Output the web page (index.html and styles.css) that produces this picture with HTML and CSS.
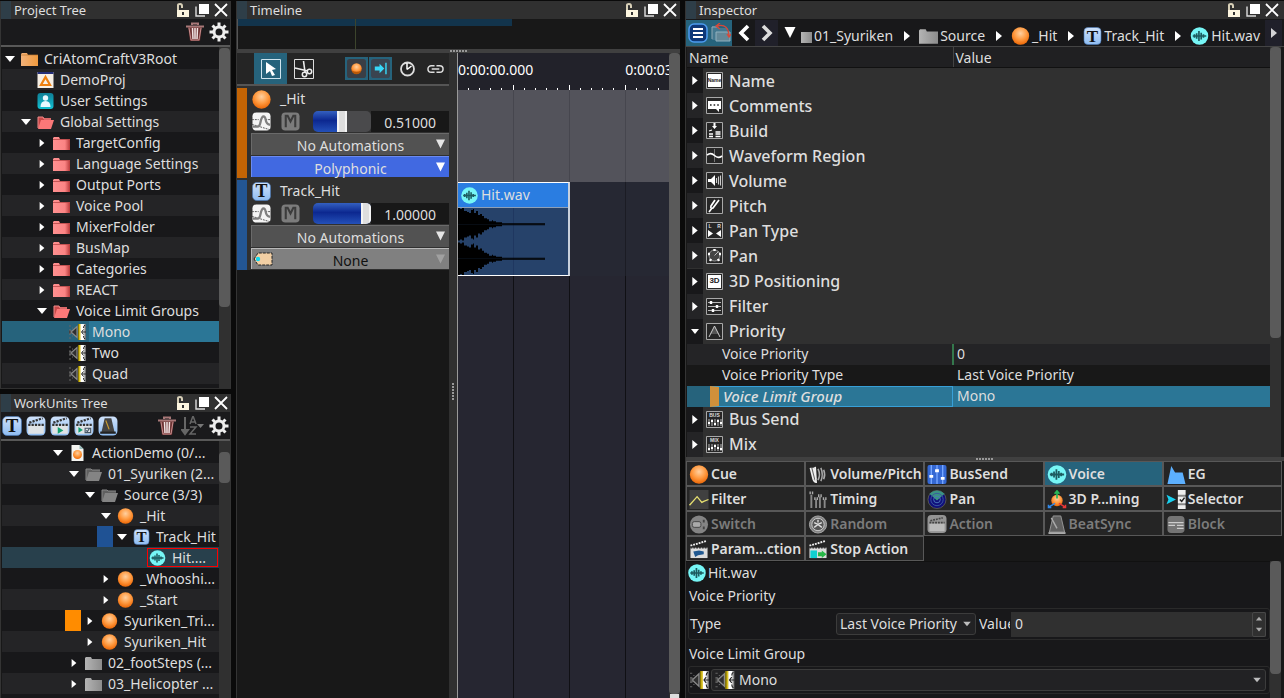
FILE: index.html
```html
<!DOCTYPE html>
<html lang="en">
<head>
<meta charset="utf-8">
<title>CriAtomCraft</title>
<link rel="stylesheet" href="styles.css">
</head>
<body>
<svg class="sprite" aria-hidden="true">
  <defs>
    <radialGradient id="gBall" cx=".5" cy=".35" r=".6"><stop offset="0" stop-color="#ffd0a0"/><stop offset=".6" stop-color="#ff9a40"/><stop offset="1" stop-color="#f07010"/></radialGradient>
    <linearGradient id="gRed"><stop offset="0" stop-color="#ff9090"/><stop offset=".7" stop-color="#fb8484"/><stop offset="1" stop-color="#b83a3a"/></linearGradient>
    <linearGradient id="gOrange"><stop offset="0" stop-color="#f2b27a"/><stop offset="1" stop-color="#f09a3e"/></linearGradient>
    <linearGradient id="gGray"><stop offset="0" stop-color="#b4b4b4"/><stop offset="1" stop-color="#8c8c8c"/></linearGradient>
    <linearGradient id="gTile" x2="0" y2="1"><stop offset="0" stop-color="#cfe2fb"/><stop offset="1" stop-color="#8fbdf2"/></linearGradient>
    <linearGradient id="gUser" x2="0" y2="1"><stop offset="0" stop-color="#0f7f96"/><stop offset="1" stop-color="#12c0d2"/></linearGradient>
    <linearGradient id="gSpk"><stop offset="0" stop-color="#fff"/><stop offset=".5" stop-color="#fff"/><stop offset="1" stop-color="#555"/></linearGradient>
  </defs>
  <symbol id="right" viewBox="0 0 8 10"><path d="M1 0l6 5-6 5z" fill="#fff"/></symbol>
  <symbol id="down" viewBox="0 0 10 8"><path d="M0 1h10L5 7z" fill="#fff"/></symbol>
  <symbol id="drop" viewBox="0 0 10 10"><path d="M0 0h10L5 10z" fill="#fff"/></symbol>
  <symbol id="lock" viewBox="0 0 14 14"><path d="M2 8V2q0-1 2-1t2 2v2" fill="none" stroke="#d8d0b8" stroke-width="2"/><path d="M1 7h12v7H1z" fill="#fdf6e0"/><path d="M6 9h2v3H6z" fill="#333"/></symbol>
  <symbol id="copy" viewBox="0 0 14 14"><path d="M1 3.500v9.500h9" fill="none" stroke="#ddd" stroke-width="1.400"/><path d="M4 1h10v10H4z" fill="#fff"/></symbol>
  <symbol id="close" viewBox="0 0 14 14"><path d="M1 1l12 12M13 1L1 13" stroke="#fff" stroke-width="1.800"/></symbol>
  <symbol id="trash" viewBox="0 0 20 20"><path d="M3 4h14l-2 15H5z" fill="#6e3434"/><path d="M1 4.500h18M7 3V1.500h6V3" fill="none" stroke="#a87878" stroke-width="2"/><path d="M4 6l2 12h8l2-12" fill="none" stroke="#c89090"/><path d="M7.500 6l.5 11M10 6v11M12.500 6l-.5 11" stroke="#f2e4e4" stroke-width="1.500"/></symbol>
  <symbol id="gear" viewBox="0 0 20 20"><circle cx="10" cy="10" r="5" fill="none" stroke="#eee" stroke-width="3"/><path d="M10 .5v4M10 15.500v4M.5 10h4M15.500 10h4M3.500 3.500l3 3M13.500 13.500l3 3M16.500 3.500l-3 3M6.500 13.500l-3 3" stroke="#eee" stroke-width="3"/></symbol>
  <symbol id="sort" viewBox="0 0 22 20"><path d="M3 1v15M0 14l3 4 3-4z" stroke="#666" stroke-width="2" fill="#666"/><path d="M8 8l3-8 3 8M9 6h4M8 11h6l-6 7h6" fill="none" stroke="#666" stroke-width="1.500"/><path d="M15 8h7l-3.500 4z" fill="#777"/></symbol>
  <symbol id="folder-o" viewBox="0 0 17 14"><path d="M0 2l1-1h5l1 2h10v11H0z" fill="url(#gOrange)"/><path d="M0 3h17" stroke="#c07830" stroke-width=".7"/></symbol>
  <symbol id="folder-r" viewBox="0 0 17 14"><path d="M0 2l1-1h5l1 2h10v11H0z" fill="url(#gRed)"/><path d="M0 3.500h17" stroke="#b84848" stroke-width=".8"/></symbol>
  <symbol id="folder-ro" viewBox="0 0 17 14"><path d="M1 13V2h5l1 1h7v3" fill="#c84848"/><path d="M1 14l3-9h13l-3 9z" fill="#fb7878"/><path d="M1 13V2h5l1 2h7" fill="none" stroke="#ee8a8a"/></symbol>
  <symbol id="folder-g" viewBox="0 0 17 14"><path d="M0 2l1-1h5l1 2h10v11H0z" fill="url(#gGray)"/></symbol>
  <symbol id="folder-half" viewBox="0 0 11 14"><path d="M0 3h11v11H0z" fill="url(#gGray)"/></symbol>
  <symbol id="folder-go" viewBox="0 0 17 14"><path d="M1 13V2h5l1 1h8v3" fill="#606060"/><path d="M1 14l3-9h13l-3 9z" fill="#848484"/><path d="M1 13V2h5l1 1h8" fill="none" stroke="#888"/></symbol>
  <symbol id="proj" viewBox="0 0 16 16"><path d="M0 0h16v16H0z" fill="#f6efe4"/><path d="M0 0h16v2H0z" fill="#25307a"/><path d="M8 5l4.500 8h-9z" fill="none" stroke="#ee8010" stroke-width="2.200"/></symbol>
  <symbol id="user" viewBox="0 0 16 16"><rect width="16" height="16" rx="3" fill="url(#gUser)"/><circle cx="8" cy="5" r="2.700" fill="#e8f8ff"/><path d="M3 14q0-6 5-6t5 6z" fill="#e8f8ff"/></symbol>
  <symbol id="spk" viewBox="0 0 17 16"><path d="M2 8l6-5.500v11z" fill="#303030" stroke="#8a8a8a" stroke-width="1.200"/><path d="M0 6h2v4H0" fill="#444" stroke="#777" stroke-width=".8"/><path d="M0 2h2M3 4h1M0 14h2M3 12h1" stroke="#666"/><path d="M9 0h3v16H9z" fill="#d8c020"/><path d="M9 0h1v16H9z" fill="#8a7800"/><path d="M11.500 0H17v16h-5.500z" fill="url(#gSpk)"/><path d="M17 8h-4M14.500 5.500L12.500 8l2 2.500M16 1q-1.500 1-1.500 3M16 15q-1.500-1-1.500-3" stroke="#222" stroke-width="1" fill="none"/></symbol>
  <symbol id="ball" viewBox="0 0 16 16"><circle cx="8" cy="8" r="7.700" fill="url(#gBall)"/></symbol>
  <symbol id="doc" viewBox="0 0 16 16"><path d="M2 0h8l4 4v12H2z" fill="#f4f4f0"/><path d="M10 0v4h4" fill="#9bb"/><circle cx="8" cy="9.500" r="4.500" fill="url(#gBall)"/></symbol>
  <symbol id="tee" viewBox="0 0 18 18"><rect x=".5" y=".5" width="17" height="17" rx="4" fill="url(#gTile)" stroke="#4878b8" stroke-width=".6"/><text x="9" y="14.500" class="tee">T</text></symbol>
  <symbol id="wav" viewBox="0 0 16 16"><circle cx="8" cy="8" r="7.800" fill="#76f6f6"/><path d="M2 8h12M3.500 6.500v3M5.500 5.500v5M7.500 3.500v9M9.500 5v6M11.500 6.500v3" stroke="#1d5c60" stroke-width="1.500"/></symbol>
  <symbol id="clap" viewBox="0 0 18 18"><rect x=".5" y=".5" width="17" height="17" rx="4" fill="url(#gTile)"/><path d="M2 8h14v8H2z" fill="#dfe3e6"/><path d="M2 8h14M3 6l12-4" stroke="#333" stroke-width="2" stroke-dasharray="2 1"/></symbol>
  <symbol id="clap-play" viewBox="0 0 18 18"><use href="#clap"/><path d="M7 10l5 3-5 3z" fill="#12a070"/></symbol>
  <symbol id="clap-check" viewBox="0 0 18 18"><use href="#clap"/><path d="M4 10l4 2.500L4 15z" fill="#12a070"/><path d="M10 11h5v4h-5zM11 13l1 1 2-3" fill="none" stroke="#456"/></symbol>
  <symbol id="metro" viewBox="0 0 18 18"><rect x=".5" y=".5" width="17" height="17" rx="4" fill="url(#gTile)"/><path d="M6 2h6l3 13H3z" fill="#444"/><path d="M10 12L7 4" stroke="#d0a030"/><path d="M2 14h14v2H2z" fill="#222"/></symbol>
  <symbol id="cursor" viewBox="0 0 20 20"><path d="M.5.5h19v19H.5z" fill="none" stroke="#cfe4ee"/><path d="M5 3l10 7-4 1 3 5-3 1-2-5-4 3z" fill="#fff"/></symbol>
  <symbol id="cut" viewBox="0 0 20 20"><path d="M.5.5h19v19H.5z" fill="none" stroke="#ddd"/><path d="M9.500 2l1.500 11M1 9l13 3" stroke="#eee" stroke-width="1.600"/><circle cx="10.500" cy="15.500" r="2.200" fill="none" stroke="#eee" stroke-width="1.500"/><circle cx="15.500" cy="12.500" r="2.200" fill="none" stroke="#eee" stroke-width="1.500"/></symbol>
  <symbol id="cuebtn" viewBox="0 0 20 20"><rect width="20" height="20" rx="3" fill="#3a3e45"/><circle cx="10" cy="10" r="5.500" fill="url(#gBall)"/><path d="M5 12q5 3 10 0-1 4-5 4t-5-4" fill="#b85808"/></symbol>
  <symbol id="snap" viewBox="0 0 20 20"><rect width="20" height="20" rx="3" fill="#3a4450"/><path d="M4 8h5V5l5 5-5 5v-3H4zM15 4h1.500v12H15z" fill="#38d8f8"/></symbol>
  <symbol id="clock" viewBox="0 0 16 16"><circle cx="8" cy="8" r="6.500" fill="none" stroke="#ddd" stroke-width="1.800"/><path d="M7.500 2v6.500M7.500 8.500L12 5" fill="none" stroke="#fff" stroke-width="1.500"/></symbol>
  <symbol id="link" viewBox="0 0 18 10"><path d="M8 1.500H4.500a3.500 3.500 0 0 0 0 7H8M10 1.500h3.500a3.500 3.500 0 0 1 0 7H10M5 5h8" fill="none" stroke="#ddd" stroke-width="1.600"/></symbol>
  <symbol id="auto" viewBox="0 0 20 20"><rect x=".5" y=".5" width="19" height="19" rx="4" fill="#f4f4f4"/><path d="M0 8h7M14 8h6M0 13l20 6" stroke="#555" stroke-dasharray="2 1"/><path d="M1 15.500h5q2 0 3-5t3-6q2 0 2.500 4t4.500 5" fill="none" stroke="#808080" stroke-width="2.400"/></symbol>
  <symbol id="mute" viewBox="0 0 20 20"><rect x=".5" y=".5" width="19" height="19" rx="4" fill="#7c7c7c"/><path d="M5 16V4h2l3 6 3-6h2v12" fill="none" stroke="#3c3c3c" stroke-width="2.200"/></symbol>
  <symbol id="tag" viewBox="0 0 20 14"><path d="M1 7l4-6h14v12H5z" fill="#f2cfa4" stroke="#222" stroke-dasharray="3 1"/><circle cx="5" cy="7" r="2.200" fill="#10d8f0"/></symbol>
  <symbol id="lines" viewBox="0 0 20 20"><rect x="1" y="1" width="18" height="18" rx="5" fill="#0e3878" stroke="#4c9cf0" stroke-width="1.500"/><path d="M5 6h10M5 10h10M5 14h10" stroke="#fff" stroke-width="2.200"/></symbol>
  <symbol id="sync" viewBox="0 0 20 20"><path d="M1 17V3h6l1 2h8v12z" fill="#447890"/><path d="M1 16V4h5" fill="none" stroke="#90a8b4"/><path d="M5 9h14v9H5z" fill="#648898" stroke="#8fb0bf"/><path d="M6 3q12-3 12 11M9 0L5 3l4 3M16 11l2 3 2-3" fill="none" stroke="#d84838" stroke-width="1.300"/></symbol>
  <symbol id="back" viewBox="0 0 12 18"><path d="M10 2L3 9l7 7" fill="none" stroke="#fff" stroke-width="3.600"/></symbol>
  <symbol id="fwd" viewBox="0 0 12 18"><path d="M2 2l7 7-7 7" fill="none" stroke="#ddd" stroke-width="3.600"/></symbol>
  <symbol id="p-name" viewBox="0 0 17 17"><path d="M.5.500h16v16H.5z" class="box"/><rect x="2" y="2" width="13" height="13" fill="#fff"/><text x="8.500" y="10" class="t5 dk">Name</text></symbol>
  <symbol id="p-com" viewBox="0 0 17 17"><path d="M.5.500h16v16H.5z" class="box"/><path d="M2 4h13v8h-2v3l-3-3H2z" fill="#fff"/><path d="M4 8h9" stroke="#222" stroke-width="1.600" stroke-dasharray="1.600 2"/></symbol>
  <symbol id="p-build" viewBox="0 0 17 17"><path d="M.5.500h16v16H.5z" class="box"/><path d="M7.500 1h2v3H11L8.500 7 6 4h1.500z" fill="#fff"/><path d="M3 12h4M3 14.500h4M9.500 10h5M9.500 12h5M9.500 14.500h5M3 9l3-1" stroke="#fff" stroke-width="1.300"/></symbol>
  <symbol id="p-wave" viewBox="0 0 17 17"><path d="M.5.500h16v16H.5z" class="box"/><path d="M8.500 2v13" stroke="#777"/><path d="M1 8q4-3 7.500.500T16 9" fill="none" stroke="#fff" stroke-width="1.600"/></symbol>
  <symbol id="p-vol" viewBox="0 0 17 17"><path d="M.5.500h16v16H.5z" class="box"/><path d="M2 7h3l4-4v11L5 10H2z" fill="#fff"/><path d="M10.500 6v5M12.500 4.500v8M14.500 3.500v10" stroke="#ccc" stroke-width="1.100"/></symbol>
  <symbol id="p-pitch" viewBox="0 0 17 17"><path d="M.5.500h16v16H.5z" class="box"/><path d="M9 3L5 9q-1 3 2 2l6-8M6 11l-3 4" fill="none" stroke="#fff" stroke-width="1.700"/></symbol>
  <symbol id="p-pt" viewBox="0 0 17 17"><path d="M.5.500h16v16H.5z" class="box"/><path d="M2 8l5 3.500L2 15zM15 8l-5 3.500 5 3.500z" fill="#fff"/><text x="4" y="6" class="t5">L</text><text x="13" y="6" class="t5">R</text></symbol>
  <symbol id="p-pan" viewBox="0 0 17 17"><path d="M.5.500h16v16H.5z" class="box"/><circle cx="8.500" cy="8.500" r="5.500" fill="#444" stroke="#999"/><path d="M8.500 8.500l4-4" stroke="#bbb"/><path d="M8.500 2v2M2 7h2M13 7h2M4 14l1-2M13 14l-1-2" stroke="#fff" stroke-width="2.400"/></symbol>
  <symbol id="p-3d" viewBox="0 0 17 17"><path d="M.5.500h16v16H.5z" class="box"/><rect x="2" y="2" width="13" height="13" fill="#fff"/><text x="8.500" y="10" class="t8 dk">3D</text></symbol>
  <symbol id="p-fil" viewBox="0 0 17 17"><path d="M.5.500h16v16H.5z" class="box"/><path d="M2 4.500h13M2 8.500h13M2 12.500h13" stroke="#bbb"/><path d="M5 3v3M11 7v3M7 11v3" stroke="#fff" stroke-width="2.400"/></symbol>
  <symbol id="p-pri" viewBox="0 0 17 17"><path d="M.5.500h16v16H.5z" class="box"/><path d="M4 11l4.500-8 4.500 8z" fill="#555"/><path d="M3 14l5.500-11L14 14" fill="none" stroke="#ccc"/></symbol>
  <symbol id="p-bus" viewBox="0 0 17 17"><path d="M.5.500h16v16H.5z" class="box"/><text x="8.500" y="5.500" class="t5">BUS</text><path d="M3 8v7M6 8v7M9 8v7M12 8v7M15 8v7" stroke="#bbb"/><path d="M2 12h2M5 10h2M8 13h2M11 10h2M14 12h2" stroke="#fff" stroke-width="2"/></symbol>
  <symbol id="p-mix" viewBox="0 0 17 17"><path d="M.5.500h16v16H.5z" class="box"/><text x="8.500" y="5.500" class="t5">MIX</text><path d="M3 8v7M6 8v7M9 8v7M12 8v7M15 8v7" stroke="#bbb"/><path d="M2 13h2M5 12h2M8 10h2M11 12h2M14 13h2" stroke="#fff" stroke-width="2"/></symbol>
  <symbol id="t-vp" viewBox="0 0 20 20"><path d="M2 3l3 12q1 3 3 3l-1-16M5 3l3 12" fill="#666" stroke="#eee" stroke-width="1.800"/><path d="M10 4q3 6 0 12M13 3q3 7 0 14M16 5q2 5 0 10" fill="none" stroke="#aaa" stroke-width="1.600"/></symbol>
  <symbol id="t-bus" viewBox="0 0 20 20"><rect width="20" height="20" rx="2" fill="#3468d4"/><path d="M4 0v20M10 0v20M16 0v20" stroke="#78a8ff" stroke-width="1.400"/><path d="M2 12h4M8 6h4M14 14h4" stroke="#fff" stroke-width="3"/></symbol>
  <symbol id="t-eg" viewBox="0 0 20 20"><path d="M1 20L5 1l4 7h8l3 12z" fill="#5cb0ff"/></symbol>
  <symbol id="t-fil" viewBox="0 0 20 20"><path d="M0 0h20v20H0z" fill="#404040"/><path d="M0 16l8-9 5 6 2-1 5-2" fill="none" stroke="#e6e070" stroke-width="1.400"/></symbol>
  <symbol id="t-tim" viewBox="0 0 20 20"><path d="M3 5v14M8 10v9M12 7v12M17 10v9" stroke="#888" stroke-width="2"/><path d="M1 3h4M6 9h4M10 6h4M15 9h4" stroke="#aaa" stroke-width="3" stroke-dasharray="1.500 1"/></symbol>
  <symbol id="t-pan" viewBox="0 0 20 20"><circle cx="10" cy="10" r="9.500" fill="#10107c" stroke="#555"/><path d="M10 11L2 4q8-7 16 0z" fill="#3a9484"/><circle cx="10" cy="10" r="6.500" fill="none" stroke="#3a58a0"/><circle cx="10" cy="10" r="3.500" fill="none" stroke="#4a78b8"/></symbol>
  <symbol id="t-3d" viewBox="0 0 20 20"><circle cx="10" cy="11" r="6" fill="url(#gBall)"/><path d="M10 9V2M7.500 4L10 1l2.500 3" stroke="#28b858" stroke-width="1.800" fill="none"/><path d="M8 14l-7 4M1 15.500v3h3" stroke="#3088e8" stroke-width="1.500" fill="none"/><path d="M12 14l7 4M19 15.500v3h-3" stroke="#e83838" stroke-width="1.500" fill="none"/></symbol>
  <symbol id="t-sel" viewBox="0 0 20 20"><path d="M0 5l10 5-10 5 2-5z" fill="#18d0f0"/><path d="M12 0h8v20h-8z" fill="#888"/><path d="M12 0h8v5h-8zM12 7h8v7h-8zM12 16h8v4h-8z" fill="#eee"/><path d="M14 10l2 2 3-4" stroke="#222" stroke-width="1.600" fill="none"/></symbol>
  <symbol id="t-sw" viewBox="0 0 20 20"><circle cx="10" cy="10" r="9.500" fill="#848484"/><rect x="3" y="7" width="9" height="6" rx="2" fill="#aaa" stroke="#444"/><path d="M15 5v3M15 12v3" stroke="#444" stroke-width="2"/></symbol>
  <symbol id="t-rnd" viewBox="0 0 20 20"><circle cx="10" cy="10" r="9" fill="#848484" stroke="#aaa"/><circle cx="10" cy="10" r="6.500" fill="#555" stroke="#ccc"/><path d="M6 13l4-3 4 3M6 8l4 2 4-2M10 5v3" stroke="#ddd" stroke-width="1.500" fill="none"/></symbol>
  <symbol id="t-act" viewBox="0 0 20 20"><rect width="20" height="19" rx="4" fill="#949494"/><path d="M2 9h16v8H2z" fill="#bbb"/><path d="M2 8h16M3 6l13-3" stroke="#444" stroke-width="1.700" stroke-dasharray="2 1"/></symbol>
  <symbol id="t-beat" viewBox="0 0 20 20"><path d="M6 1h8l4 17H2z" fill="#606060" stroke="#999"/><path d="M10 14L4 3" stroke="#aaa" stroke-width="1.500"/><path d="M1 19h18" stroke="#aaa" stroke-width="2"/></symbol>
  <symbol id="t-blk" viewBox="0 0 20 20"><rect x="1" y="1" width="18" height="18" rx="4" fill="#747474"/><path d="M2 8h16M2 11h7M11 11h7M11 14h7" stroke="#ccc" stroke-width="1.400"/></symbol>
  <symbol id="t-par" viewBox="0 0 20 20"><path d="M1 6l17-5" stroke="#eee" stroke-width="2" stroke-dasharray="2 1"/><path d="M1 8h18v11H1z" fill="#ddd"/><path d="M1 8h18" stroke="#333" stroke-width="2" stroke-dasharray="2 1"/><path d="M4 12l6-1 5 1v3l-6 1-3 2z" fill="#205890"/></symbol>
  <symbol id="t-stop" viewBox="0 0 20 20"><path d="M1 6l17-5" stroke="#eee" stroke-width="2" stroke-dasharray="2 1"/><path d="M1 8h18v11H1z" fill="#ddd"/><path d="M1 8h18" stroke="#333" stroke-width="2" stroke-dasharray="2 1"/><path d="M2 11h7v8H2z" fill="#10d0d0"/><path d="M10 13h4v-2l5 4-5 4v-2h-4z" fill="#28b848"/></symbol>
</svg>

<main class="app">
  <div class="column">
    <section class="panel panel-project">
      <header class="title"><h2>Project Tree</h2><span class="winbtns"><button aria-label="Lock"><svg><use href="#lock"/></svg></button><button aria-label="Float"><svg><use href="#copy"/></svg></button><button aria-label="Close"><svg><use href="#close"/></svg></button></span></header>
      <div class="tools tools-end"><button aria-label="Delete"><svg><use href="#trash"/></svg></button><button aria-label="Options"><svg><use href="#gear"/></svg></button></div>
      <div class="scroller">
        <ul class="tree">
          <li class="d0"><svg class="arw"><use href="#down"/></svg><svg class="ico"><use href="#folder-o"/></svg>CriAtomCraftV3Root</li>
          <li class="d1"><i class="arw"></i><svg class="ico"><use href="#proj"/></svg>DemoProj</li>
          <li class="d1"><i class="arw"></i><svg class="ico"><use href="#user"/></svg>User Settings</li>
          <li class="d1"><svg class="arw"><use href="#down"/></svg><svg class="ico"><use href="#folder-ro"/></svg>Global Settings</li>
          <li class="d2"><svg class="arw"><use href="#right"/></svg><svg class="ico"><use href="#folder-r"/></svg>TargetConfig</li>
          <li class="d2"><svg class="arw"><use href="#right"/></svg><svg class="ico"><use href="#folder-r"/></svg>Language Settings</li>
          <li class="d2"><svg class="arw"><use href="#right"/></svg><svg class="ico"><use href="#folder-r"/></svg>Output Ports</li>
          <li class="d2"><svg class="arw"><use href="#right"/></svg><svg class="ico"><use href="#folder-r"/></svg>Voice Pool</li>
          <li class="d2"><svg class="arw"><use href="#right"/></svg><svg class="ico"><use href="#folder-r"/></svg>MixerFolder</li>
          <li class="d2"><svg class="arw"><use href="#right"/></svg><svg class="ico"><use href="#folder-r"/></svg>BusMap</li>
          <li class="d2"><svg class="arw"><use href="#right"/></svg><svg class="ico"><use href="#folder-r"/></svg>Categories</li>
          <li class="d2"><svg class="arw"><use href="#right"/></svg><svg class="ico"><use href="#folder-r"/></svg>REACT</li>
          <li class="d2"><svg class="arw"><use href="#down"/></svg><svg class="ico"><use href="#folder-ro"/></svg>Voice Limit Groups</li>
          <li class="d3 selected"><i class="arw"></i><svg class="ico"><use href="#spk"/></svg>Mono</li>
          <li class="d3"><i class="arw"></i><svg class="ico"><use href="#spk"/></svg>Two</li>
          <li class="d3"><i class="arw"></i><svg class="ico"><use href="#spk"/></svg>Quad</li>
          <li></li>
        </ul>
        <div class="bar"><div class="thumb thumb-project"></div></div>
      </div>
    </section>
    <section class="panel panel-work">
      <header class="title"><h2>WorkUnits Tree</h2><span class="winbtns"><button aria-label="Lock"><svg><use href="#lock"/></svg></button><button aria-label="Float"><svg><use href="#copy"/></svg></button><button aria-label="Close"><svg><use href="#close"/></svg></button></span></header>
      <div class="tools tools-work">
        <button aria-label="Track"><svg><use href="#tee"/></svg></button><button aria-label="Action"><svg><use href="#clap"/></svg></button><button aria-label="Play action"><svg><use href="#clap-play"/></svg></button><button aria-label="Check action"><svg><use href="#clap-check"/></svg></button><button aria-label="Beat sync"><svg><use href="#metro"/></svg></button>
        <span class="grow"></span>
        <button aria-label="Delete"><svg><use href="#trash"/></svg></button><button class="wide" aria-label="Sort"><svg><use href="#sort"/></svg></button><button aria-label="Options"><svg><use href="#gear"/></svg></button>
      </div>
      <div class="scroller">
        <ul class="tree">
          <li class="d3"><svg class="arw"><use href="#down"/></svg><svg class="ico"><use href="#doc"/></svg>ActionDemo (0/...</li>
          <li class="d4"><svg class="arw"><use href="#down"/></svg><svg class="ico"><use href="#folder-go"/></svg>01_Syuriken (2...</li>
          <li class="d5"><svg class="arw"><use href="#down"/></svg><svg class="ico"><use href="#folder-go"/></svg>Source (3/3)</li>
          <li class="d6"><svg class="arw"><use href="#down"/></svg><svg class="ico"><use href="#ball"/></svg>_Hit</li>
          <li class="d6"><i class="chip chip-blue"></i><svg class="arw"><use href="#down"/></svg><svg class="ico"><use href="#tee"/></svg>Track_Hit</li>
          <li class="d8 current"><span class="marked"><svg class="ico"><use href="#wav"/></svg>Hit....</span></li>
          <li class="d6"><svg class="arw"><use href="#right"/></svg><svg class="ico"><use href="#ball"/></svg>_Whooshi...</li>
          <li class="d6"><svg class="arw"><use href="#right"/></svg><svg class="ico"><use href="#ball"/></svg>_Start</li>
          <li class="d4"><i class="chip chip-orange"></i><svg class="arw"><use href="#right"/></svg><svg class="ico"><use href="#ball"/></svg>Syuriken_Tri...</li>
          <li class="d5"><svg class="arw"><use href="#right"/></svg><svg class="ico"><use href="#ball"/></svg>Syuriken_Hit</li>
          <li class="d4"><svg class="arw"><use href="#right"/></svg><svg class="ico"><use href="#folder-g"/></svg>02_footSteps (...</li>
          <li class="d4"><svg class="arw"><use href="#right"/></svg><svg class="ico"><use href="#folder-g"/></svg>03_Helicopter ...</li>
          <li></li>
        </ul>
        <div class="bar bar-work"><div class="thumb thumb-work"></div></div>
      </div>
    </section>
  </div>

  <section class="panel timeline">
    <header class="title"><h2>Timeline</h2><span class="winbtns"><button aria-label="Lock"><svg><use href="#lock"/></svg></button><button aria-label="Float"><svg><use href="#copy"/></svg></button><button aria-label="Close"><svg><use href="#close"/></svg></button></span></header>
    <div class="overview"><div class="range"></div><div class="playhead"></div></div>
    <div class="split-h"><i class="dots"></i></div>
    <div class="stage">
      <div class="tracks">
        <div class="modes">
          <button class="mode on" aria-label="Select"><svg><use href="#cursor"/></svg></button>
          <button class="mode" aria-label="Cut"><svg><use href="#cut"/></svg></button>
          <span class="grow"></span>
          <button class="toggle" aria-label="Cue"><svg><use href="#cuebtn"/></svg></button>
          <button class="toggle" aria-label="Snap"><svg><use href="#snap"/></svg></button>
          <button class="plain" aria-label="Time"><svg><use href="#clock"/></svg></button>
          <button class="plain" aria-label="Link"><svg><use href="#link"/></svg></button>
        </div>
        <article class="track track-cue">
          <div class="track-body">
            <div class="track-name"><svg><use href="#ball"/></svg>_Hit</div>
            <div class="track-ctl"><button aria-label="Automation"><svg><use href="#auto"/></svg></button><button aria-label="Mute"><svg><use href="#mute"/></svg></button><input type="range" class="fader" min="0" max="100" value="51" style="--v:51%" aria-label="Volume"><output>0.51000</output></div>
            <div class="pick"><select aria-label="Automations"><option>No Automations</option></select><svg><use href="#drop"/></svg></div>
            <div class="pick pick-blue"><select aria-label="Sequence type"><option>Polyphonic</option></select><svg><use href="#drop"/></svg></div>
          </div>
        </article>
        <article class="track track-sub">
          <div class="track-body">
            <div class="track-name"><svg><use href="#tee"/></svg>Track_Hit</div>
            <div class="track-ctl"><button aria-label="Automation"><svg><use href="#auto"/></svg></button><button aria-label="Mute"><svg><use href="#mute"/></svg></button><input type="range" class="fader" min="0" max="100" value="100" style="--v:100%" aria-label="Volume"><output>1.00000</output></div>
            <div class="pick"><select aria-label="Automations"><option>No Automations</option></select><svg><use href="#drop"/></svg></div>
            <div class="pick pick-none"><select aria-label="Selector"><option>None</option></select><svg><use href="#drop"/></svg><svg class="tag"><use href="#tag"/></svg></div>
          </div>
        </article>
      </div>
      <div class="split-v"><i class="dots-v"></i></div>
      <div class="canvas">
        <div class="ruler"><div class="times"><span>0:00:00.000</span><span>0:00:03.000</span></div></div>
        <div class="lane lane-cue"></div>
        <div class="lane lane-track">
          <div class="clip">
            <div class="clip-name"><svg><use href="#wav"/></svg>Hit.wav</div>
            <svg class="wave" viewBox="0 0 110 66" preserveAspectRatio="none">
              <defs>
                <path id="half" d="M0 0V-16H2V-15H4V-16H6V-13H9V-12H11V-11H13V-14H15V-15H16V-11H18V-13H20V-9H22V-10H24V-8H26V-6H29V-5H31V-3H34V-4H35V-3H38V-2H44V-1H87V0z"/>
                <g id="channel"><use href="#half"/><use href="#half" transform="scale(1 -1)"/></g>
              </defs>
              <use href="#channel" y="16"/>
              <use href="#channel" y="50"/>
            </svg>
          </div>
        </div>
        <div class="lane lane-empty"></div>
      </div>
      <div class="bar bar-time"><div class="thumb thumb-time"></div><div class="knob"></div></div>
    </div>
  </section>

  <section class="panel inspector">
    <header class="title"><h2>Inspector</h2><span class="winbtns"><button aria-label="Lock"><svg><use href="#lock"/></svg></button><button aria-label="Float"><svg><use href="#copy"/></svg></button><button aria-label="Close"><svg><use href="#close"/></svg></button></span></header>
    <nav class="crumbs">
      <button class="nav on" aria-label="List"><svg><use href="#lines"/></svg></button>
      <button class="nav on" aria-label="Sync"><svg><use href="#sync"/></svg></button>
      <button class="nav thin" aria-label="Back"><svg><use href="#back"/></svg></button>
      <button class="nav thin dim" aria-label="Forward"><svg><use href="#fwd"/></svg></button>
      <button class="nav drop" aria-label="History"><svg><use href="#drop"/></svg></button>
      <a href="#" class="crumb cropped"><svg><use href="#folder-half"/></svg>01_Syuriken</a><svg class="sep"><use href="#right"/></svg>
      <a href="#" class="crumb"><svg><use href="#folder-g"/></svg>Source</a><svg class="sep"><use href="#right"/></svg>
      <a href="#" class="crumb"><svg><use href="#ball"/></svg>_Hit</a><svg class="sep"><use href="#right"/></svg>
      <a href="#" class="crumb"><svg><use href="#tee"/></svg>Track_Hit</a><svg class="sep"><use href="#right"/></svg>
      <a href="#" class="crumb"><svg><use href="#wav"/></svg>Hit.wav</a>
      <button class="more" aria-label="More"><svg><use href="#right"/></svg></button>
    </nav>
    <div class="scroller props">
      <table>
        <thead><tr><th class="col-name">Name</th><th>Value</th></tr></thead>
        <tbody>
          <tr class="group"><td colspan="2"><div><svg class="arw"><use href="#right"/></svg><svg class="pic"><use href="#p-name"/></svg>Name</div></td></tr>
          <tr class="group"><td colspan="2"><div><svg class="arw"><use href="#right"/></svg><svg class="pic"><use href="#p-com"/></svg>Comments</div></td></tr>
          <tr class="group"><td colspan="2"><div><svg class="arw"><use href="#right"/></svg><svg class="pic"><use href="#p-build"/></svg>Build</div></td></tr>
          <tr class="group"><td colspan="2"><div><svg class="arw"><use href="#right"/></svg><svg class="pic"><use href="#p-wave"/></svg>Waveform Region</div></td></tr>
          <tr class="group"><td colspan="2"><div><svg class="arw"><use href="#right"/></svg><svg class="pic"><use href="#p-vol"/></svg>Volume</div></td></tr>
          <tr class="group"><td colspan="2"><div><svg class="arw"><use href="#right"/></svg><svg class="pic"><use href="#p-pitch"/></svg>Pitch</div></td></tr>
          <tr class="group"><td colspan="2"><div><svg class="arw"><use href="#right"/></svg><svg class="pic"><use href="#p-pt"/></svg>Pan Type</div></td></tr>
          <tr class="group"><td colspan="2"><div><svg class="arw"><use href="#right"/></svg><svg class="pic"><use href="#p-pan"/></svg>Pan</div></td></tr>
          <tr class="group"><td colspan="2"><div><svg class="arw"><use href="#right"/></svg><svg class="pic"><use href="#p-3d"/></svg>3D Positioning</div></td></tr>
          <tr class="group"><td colspan="2"><div><svg class="arw"><use href="#right"/></svg><svg class="pic"><use href="#p-fil"/></svg>Filter</div></td></tr>
          <tr class="group"><td colspan="2"><div><svg class="arw"><use href="#down"/></svg><svg class="pic"><use href="#p-pri"/></svg>Priority</div></td></tr>
          <tr class="prop alt"><td>Voice Priority</td><td class="edited">0</td></tr>
          <tr class="prop"><td>Voice Priority Type</td><td>Last Voice Priority</td></tr>
          <tr class="prop picked"><td><div class="focus">Voice Limit Group</div></td><td>Mono</td></tr>
          <tr class="group"><td colspan="2"><div><svg class="arw"><use href="#right"/></svg><svg class="pic"><use href="#p-bus"/></svg>Bus Send</div></td></tr>
          <tr class="group"><td colspan="2"><div><svg class="arw"><use href="#right"/></svg><svg class="pic"><use href="#p-mix"/></svg>Mix</div></td></tr>
        </tbody>
      </table>
      <div class="bar bar-props"><div class="thumb thumb-props"></div></div>
    </div>
    <div class="split-h"><i class="dots"></i></div>
    <div class="tabs">
      <button><svg><use href="#ball"/></svg>Cue</button>
      <button><svg><use href="#t-vp"/></svg>Volume/Pitch</button>
      <button><svg><use href="#t-bus"/></svg>BusSend</button>
      <button class="active"><svg><use href="#wav"/></svg>Voice</button>
      <button><svg><use href="#t-eg"/></svg>EG</button>
      <button><svg><use href="#t-fil"/></svg>Filter</button>
      <button><svg><use href="#t-tim"/></svg>Timing</button>
      <button><svg><use href="#t-pan"/></svg>Pan</button>
      <button><svg><use href="#t-3d"/></svg>3D P...ning</button>
      <button><svg><use href="#t-sel"/></svg>Selector</button>
      <button disabled><svg><use href="#t-sw"/></svg>Switch</button>
      <button disabled><svg><use href="#t-rnd"/></svg>Random</button>
      <button disabled><svg><use href="#t-act"/></svg>Action</button>
      <button disabled><svg><use href="#t-beat"/></svg>BeatSync</button>
      <button disabled><svg><use href="#t-blk"/></svg>Block</button>
      <button><svg><use href="#t-par"/></svg>Param...ction</button>
      <button><svg><use href="#t-stop"/></svg>Stop Action</button>
    </div>
    <div class="scroller detail">
      <form class="form">
        <div class="target"><svg><use href="#wav"/></svg>Hit.wav</div>
        <h3>Voice Priority</h3>
        <div class="frame frame-tall">
          <label class="type-label" for="type">Type</label>
          <span class="combo combo-type"><select id="type"><option>Last Voice Priority</option></select><svg><use href="#down"/></svg></span>
          <label class="value-label" for="value">Value</label>
          <span class="spin"><input id="value" type="text" value="0"><span class="steps"><button type="button" aria-label="Up"><svg class="up"><use href="#down"/></svg></button><button type="button" aria-label="Down"><svg><use href="#down"/></svg></button></span></span>
        </div>
        <h3 id="limit">Voice Limit Group</h3>
        <div class="frame">
          <svg class="spk"><use href="#spk"/></svg>
          <span class="combo combo-group"><svg class="spk"><use href="#spk"/></svg><select aria-labelledby="limit"><option>Mono</option></select><svg><use href="#down"/></svg></span>
        </div>
      </form>
      <div class="bar"><div class="thumb thumb-detail"></div></div>
    </div>
  </section>
</main>
</body>
</html>
```
FILE: styles.css
```css
* { box-sizing: border-box; }
html, body { height: 100%; }
body {
  margin: 0;
  overflow: hidden;
  background: #0a0a0a;
  color: #dedede;
  font: 14px/20px "Noto Sans", "Open Sans", sans-serif;
}
.sprite { position: absolute; width: 0; height: 0; visibility: hidden; }
button, select, input { font: inherit; color: inherit; }
button { border: 0; padding: 0; background: none; display: flex; align-items: center; justify-content: center; }
select { appearance: none; border: 0; margin: 0; }
svg { flex: none; display: block; }
h2, h3, ul { margin: 0; padding: 0; font-weight: 400; }
.grow { flex: 1; }

.tee { font: bold 17px "Liberation Serif", serif; text-anchor: middle; fill: #111; }
.t5 { font: bold 5px "Liberation Sans", sans-serif; text-anchor: middle; fill: #ddd; }
.t8 { font: bold 8px "Liberation Sans", sans-serif; text-anchor: middle; }
.dk { fill: #222; }
.box { fill: #262626; stroke: #a8a8a8; }

/* Application columns */
.app {
  display: grid;
  grid-template-columns: minmax(0, 231fr) minmax(0, 444fr) minmax(0, 599fr);
  gap: 5px;
  height: 100vh;
  padding-top: 1px;
}
.column { display: flex; flex-direction: column; gap: 5px; min-height: 0; }
.panel { display: flex; flex-direction: column; min-height: 0; min-width: 0; background: #181818; border-left: 1px solid #343434; }
.column .panel { border-right: 1px solid #343434; }
.panel-project { flex: 388 1 0; border-bottom: 1px solid #303030; }
.panel-work { flex: 304 1 0; }

.title { display: flex; align-items: center; height: 18px; flex: none; background: linear-gradient(90deg, #2e3e48 10px, #303030 10px); padding: 0 2px 0 13px; }
.timeline .title { padding-right: 3px; }
.inspector .title { padding-right: 5px; }
.title h2 { font-size: 13px; flex: 1; }
.winbtns { display: flex; gap: 5px; }
.winbtns svg { width: 14px; height: 14px; }

.tools { display: flex; align-items: center; gap: 4px; height: 28px; flex: none; padding: 0 1px; border-bottom: 2px solid #585858; background: #1a1a1c; }
.tools-end { justify-content: flex-end; }
.tools-work { height: 29px; }
.tools svg { width: 20px; height: 20px; }
.tools .wide svg { width: 24px; }

/* Trees */
.scroller { display: flex; flex: 1; min-height: 0; }
.tree { flex: 1; list-style: none; overflow: hidden; padding: 1px 0 0 1px; min-width: 0; }
.tree li { display: flex; align-items: center; height: 21px; white-space: nowrap; background: #18181a; }
.tree li:nth-child(even) { background: #242426; }
.tree .arw { width: 16px; height: 8px; flex: none; }
.ico { width: 17px; height: 16px; margin: 0 6px 0 3px; }
.tree .d1 { padding-left: 16px; }
.tree .d2 { padding-left: 32px; }
.tree .d3 { padding-left: 48px; }
.tree .d4 { padding-left: 64px; }
.tree .d5 { padding-left: 80px; }
.tree .d6 { padding-left: 96px; }
.tree .d8 { padding-left: 145px; }
.tree .d4:has(.chip) { padding-left: 63px; }
.tree .d6:has(.chip) { padding-left: 95px; }
.tree li.selected:nth-child(n) { background: linear-gradient(90deg, #26637c 87px, #2b7696 87px); }
.tree li.current:nth-child(n) { background: #28404c; }
.chip { width: 16px; height: 21px; margin-right: 1px; }
.chip-blue { background: #1f5294; }
.chip-orange { background: #ff8c00; }
.marked { display: flex; align-items: center; flex: 1; height: 19px; margin-right: 1px; border: 1px solid #ff0000; }
.marked .ico { margin-left: 1px; }

.bar { width: 11px; flex: none; background: #303030; display: flex; flex-direction: column; }
.thumb { background: #5a5a5a; border-radius: 4px; }
.thumb-project { height: 76%; margin-top: 1px; }
.bar-work { padding-top: 11px; }
.thumb-work { height: 31px; }
.thumb-props { height: 71%; }
.thumb-detail { height: 113px; }
.thumb-time { flex: 1; }

/* Timeline */
.overview { height: 30px; flex: none; position: relative; border-left: 1px solid #555; }
.range { width: 62%; height: 7px; background: #12344c; }
.playhead { position: absolute; top: 0; bottom: 0; left: 117px; width: 1px; background: #3c442c; }
.split-h { height: 4px; flex: none; background: #404040; display: flex; align-items: center; justify-content: center; }
.dots { width: 18px; height: 2px; background: repeating-linear-gradient(90deg, #999 0 2px, transparent 2px 3px); }
.stage { flex: 1; display: flex; min-height: 0; }
.tracks { flex: 0 0 212px; display: flex; flex-direction: column; }
.modes { display: flex; align-items: center; height: 33px; padding-left: 17px; border-bottom: 2px solid #555; background: #252525; }
.mode { width: 33px; height: 31px; }
.mode svg { width: 20px; height: 20px; }
.on { background: #26637c; }
.toggle { width: 23px; height: 23px; background: #26637c; margin-right: 1px; }
.toggle svg { width: 19px; height: 19px; }
.plain { width: 28px; height: 23px; }
.plain svg { width: 17px; height: 16px; }

.track { display: flex; height: 92px; padding-top: 2px; background: #303030; }
.track::before { content: ""; width: 10px; flex: none; background: #c46404; }
.track-sub::before { background: #235694; }
.track-body { flex: 1; display: grid; grid-template-rows: 22px 21px 22px 21px; row-gap: 1px; padding-left: 4px; }
.track-name { display: flex; align-items: center; gap: 9px; padding-left: 1px; }
.track-name svg { width: 19px; height: 19px; }
.track-ctl { display: flex; align-items: center; padding-left: 1px; }
.track-ctl button { margin-right: 10px; }
.track-ctl svg { width: 19px; height: 19px; }
.track-ctl output { flex: 1; height: 21px; line-height: 23px; background: #181818; text-align: right; padding-right: 13px; }
.fader { appearance: none; width: 58px; height: 21px; margin: 0 0 0 3px; border-radius: 5px; overflow: hidden; background: linear-gradient(#3460c0, #0c2890 45%, #2450b8) 0 0 / var(--v) 100% no-repeat #4a4a4c; }
.fader::-webkit-slider-thumb { appearance: none; width: 10px; height: 21px; background: #dedede; border: 1px solid #f4f4f4; border-width: 0 2px; }
.pick { position: relative; border-top: 1px solid #6a6a6a; border-left: 1px solid #6a6a6a; background: #525252; }
.pick select { width: 100%; height: 22px; background: transparent; text-align: center; text-align-last: center; display: block; padding: 1px 0 0; }
.pick svg { position: absolute; right: 4px; top: 5px; width: 9px; height: 10px; opacity: .85; pointer-events: none; }
.pick-blue { background: #4169e1; border-color: #6a8af0; }
.pick-blue svg { opacity: 1; }
.pick-none { background: #808080; color: #111; border-color: #b8b8b8; }
.pick-none svg { opacity: .25; }
.pick .tag { left: 1px; top: 3px; width: 20px; height: 14px; opacity: 1; }

.split-v { width: 8px; flex: none; background: #303030; display: flex; align-items: center; justify-content: center; }
.dots-v { width: 2px; height: 18px; margin-top: 32px; background: repeating-linear-gradient(#999 0 2px, transparent 2px 3px); }
.canvas { flex: 1; display: flex; flex-direction: column; border-left: 1px solid #999; min-width: 0; }
.ruler {
  height: 37px; flex: none; overflow: hidden; padding-top: 7px;
  background:
    linear-gradient(90deg, transparent 55px, #fff 55px) 0 100% / 56px 5px repeat-x,
    linear-gradient(90deg, transparent 10px, #fff 10px 11px, transparent 11px 21px, #fff 21px 22px, transparent 22px 32px, #fff 32px 33px, transparent 33px 43px, #fff 43px 44px, transparent 44px) 0 100% / 56px 2px repeat-x #22222a;
}
.times { display: flex; gap: 92px; color: #fff; white-space: nowrap; }
.lane { flex: none; background: linear-gradient(90deg, transparent 55px, var(--grid) 55px) 0 0 / 56px 100% var(--fill); }
.lane-cue { height: 92px; --grid: #46464e; --fill: #53535b; }
.lane-track { height: 94px; --grid: #1b1c24; --fill: #262833; }
.lane-empty { flex: 1; --grid: #101014; --fill: #262631; }
.clip { display: flex; flex-direction: column; width: 112px; height: 94px; border: 1px solid #fff; border-left: 0; border-right: 2px solid #c8d0dc; background: linear-gradient(90deg, transparent 55px, #1f3760 55px 56px, transparent 56px) #26426a; }
.clip-name { display: flex; align-items: center; gap: 3px; height: 25px; padding-left: 3px; background: #2a7de1; border-bottom: 1px solid #8ea0b8; flex: none; }
.clip-name svg { width: 17px; height: 17px; }
.wave { width: 100%; flex: 1; min-height: 0; }
.knob { height: 4px; margin: 0 1px; background: #ddd; }

/* Inspector */
.crumbs { display: flex; align-items: center; height: 27px; flex: none; background: #18181a; overflow: hidden; white-space: nowrap; }
.nav { width: 23px; height: 26px; flex: none; }
.nav svg { width: 20px; height: 20px; }
.thin svg { width: 12px; height: 18px; }
.dim { background: #20202a; }
.drop svg { width: 12px; height: 11px; }
.crumb { display: flex; align-items: center; gap: 2px; color: inherit; text-decoration: none; padding-top: 6px; }
.crumb svg { width: 19px; height: 18px; }
.cropped svg { width: 11px; height: 14px; }
.sep { width: 8px; height: 10px; margin: 6px 8px 0 10px; }
.more { width: 17px; height: 26px; margin-left: auto; background: #20202a; flex: none; margin-right: 2px; }
.more svg { width: 8px; height: 10px; opacity: .8; }

.props { flex: none; height: 411px; border-top: 1px solid #444; padding: 0 3px 0 1px; overflow: hidden; }
.props table { flex: 1; border-collapse: collapse; table-layout: fixed; width: 100%; background: #181818; }
.props th { height: 20px; line-height: 19px; padding: 1px 0 0 2px; text-align: left; font-weight: 400; background: #202022; border-right: 1px solid #444; border-bottom: 1px solid #111; }
.props th:last-child { border-right: 0; }
.col-name { width: 266px; }
.props td { padding: 0; }
.group td { height: 25px; background: #303030; }
.group div { display: flex; align-items: center; height: 25px; font-size: 16px; font-weight: 500; }
.group .arw { width: 16px; height: 25px; padding: 8px 4px; background: #18181a; }
.group:nth-child(even) .arw { background: #242426; }
.pic { width: 17px; height: 17px; margin: 0 6px 0 3px; }
.prop td { height: 21px; padding-left: 35px; line-height: 20px; }
.prop td + td { padding-left: 4px; }
.alt td { background: #242426; }
.prop .edited { border-left: 2px solid #34784c; padding-left: 3px; }
.picked td { background: #2b7696; }
.prop.picked td:first-child { padding-left: 23px; background: #26637c; }
.focus { height: 21px; border: 1px solid #38a0d8; border-left: 9px solid #d0903a; padding-left: 4px; font-size: 15px; font-style: italic; font-weight: 500; line-height: 18px; background: #2b7696; }

.tabs { display: grid; grid-template-columns: repeat(5, minmax(0, 1fr)); grid-auto-rows: 25px; margin-right: 2px; flex: none; }
.tabs button { justify-content: flex-start; gap: 2px; padding: 1px 0 0 2px; background: #252525; border: 1px solid #585858; font-weight: 600; white-space: nowrap; overflow: hidden; }
.tabs svg { width: 20px; height: 19px; }
.tabs .active { background: #26637c; }
.tabs button:disabled { color: #7c7c7c; }

.detail { padding-right: 3px; }
.form { flex: 1; min-width: 0; padding-left: 2px; background: #18181a; border-top: 1px solid #111; }
.target { display: flex; align-items: center; gap: 2px; height: 22px; }
.target svg { width: 18px; height: 18px; }
.form h3 { font-size: 14px; height: 24px; line-height: 23px; padding-left: 1px; }
.form .frame + h3 { height: 26px; line-height: 28px; }
.frame { display: flex; align-items: center; height: 28px; padding: 0 3px 0 1px; border: 1px solid #2a2a2a; border-radius: 3px; }
.frame-tall { height: 32px; }
.type-label { width: 146px; flex: none; }
.combo { position: relative; display: flex; height: 22px; border: 1px solid #3c3c3c; border-radius: 3px; background: #222224; }
.combo select { width: 100%; background: transparent; padding: 0 3px; height: 20px; }
.combo svg { position: absolute; right: 4px; top: 7px; width: 8px; height: 6px; opacity: .7; pointer-events: none; }
.combo-type { width: 140px; flex: none; }
.value-label { width: 31px; flex: none; overflow: hidden; margin: 0 1px 0 3px; }
.spin { flex: 1; display: flex; height: 25px; background: #303030; min-width: 0; }
.spin input { flex: 1; min-width: 0; border: 0; background: transparent; padding: 0 4px; }
.steps { width: 14px; display: flex; flex-direction: column; border: 1px solid #484848; border-radius: 2px; }
.steps button { flex: 1; }
.steps svg { width: 8px; height: 5px; opacity: .6; }
.steps .up { rotate: 180deg; }
.spk { width: 19px; height: 18px; }
.combo-group { flex: 1; margin-left: 2px; }
.combo-group select { padding-left: 27px; }
.combo-group .spk { left: 3px; top: 1px; width: 20px; height: 18px; opacity: 1; }
```
